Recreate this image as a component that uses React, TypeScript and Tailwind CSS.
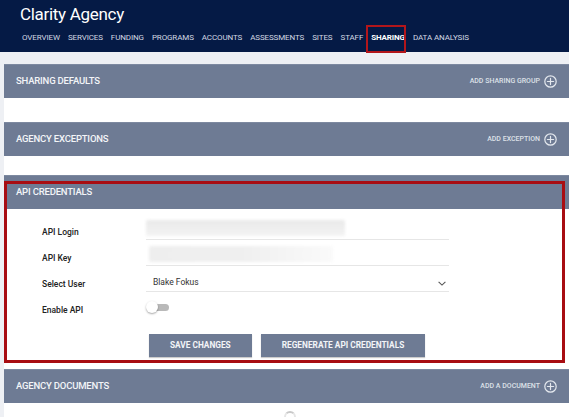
import React from "react";

const NAV = [
  "OVERVIEW",
  "SERVICES",
  "FUNDING",
  "PROGRAMS",
  "ACCOUNTS",
  "ASSESSMENTS",
  "SITES",
  "STAFF",
  "SHARING",
  "DATA ANALYSIS",
];

const PlusCircle = () => (
  <svg width="13" height="13" viewBox="0 0 13 13" fill="none" stroke="#e4e8ee" strokeWidth="1.2">
    <circle cx="6.5" cy="6.5" r="5.7" />
    <path d="M6.5 3.4v6.2M3.4 6.5h6.2" strokeLinecap="round" />
  </svg>
);

const PanelHeader = ({ title, action }: { title: string; action?: string }) => (
  <div className="flex h-[34px] items-center justify-between bg-[#6e7b94] pl-[12px] pr-[12px] border-t border-[#7d89a0]">
    <span className="text-[9.5px] font-medium tracking-[-0.02em] text-[#f3f5f8]">{title}</span>
    {action && (
      <div className="flex items-center gap-[4px]">
        <span className="text-[7px] font-medium text-[#dde1e8]">{action}</span>
        <PlusCircle />
      </div>
    )}
  </div>
);

const Label = ({ children }: { children: React.ReactNode }) => (
  <span className="w-[104px] shrink-0 pb-[3px] text-[8.5px] leading-[10px] font-medium text-[#222]">
    {children}
  </span>
);

export default function App() {
  return (
    <div className="h-[417px] w-[569px] overflow-hidden bg-[#eef0f4] font-['Roboto',sans-serif]">
      {/* Top bar */}
      <header className="h-[52px] bg-[#051a45] pl-[20px]">
        <h1 className="pt-[3px] text-[17px] leading-[22px] tracking-[-0.3px] text-white">Clarity Agency</h1>
        <nav className="mt-[8px] flex gap-[8px] pl-[2px] text-[8px] leading-[10px] tracking-[-0.015em] text-[#d3d8e2]">
          {NAV.map((item) =>
            item === "SHARING" ? (
              <span key={item} className="relative font-bold text-white">
                {item}
                <span className="absolute -left-[5px] -right-[1px] -top-[8px] -bottom-[10px] border-[2.5px] border-[#b3161b]" />
              </span>
            ) : (
              <span key={item}>{item}</span>
            )
          )}
        </nav>
      </header>

      <main className="flex flex-col pl-[4px] pt-[12px]">
        <PanelHeader title="SHARING DEFAULTS" action="ADD SHARING GROUP" />
        <div className="h-[24px] bg-white" />

        <PanelHeader title="AGENCY EXCEPTIONS" action="ADD EXCEPTION" />
        <div className="h-[19px] bg-white" />

        {/* API credentials, outlined */}
        <div className="relative">
          <PanelHeader title="API CREDENTIALS" />
          <div className="bg-white pl-[38px] pt-[5px] pb-[12px]">
            <div className="flex h-[26px] items-end">
              <Label>API Login</Label>
              <div className="h-full w-[303px] border-b border-[#e6e6e6] pt-[6px]">
                <div className="h-[16px] w-[199px] rounded-[2px] bg-gradient-to-b from-[#e9e9e9] to-[#f3f3f3] blur-[1.5px]" />
              </div>
            </div>
            <div className="flex h-[26px] items-end">
              <Label>API Key</Label>
              <div className="h-full w-[303px] border-b border-[#e6e6e6] pl-[3px] pt-[6px]">
                <div className="h-[16px] w-[184px] rounded-[2px] bg-gradient-to-r from-[#eeeeee] via-[#efefef] to-[#fafafa] blur-[1.5px]" />
              </div>
            </div>
            <div className="flex h-[26px] items-end">
              <Label>Select User</Label>
              <div className="flex h-full w-[303px] items-end justify-between border-b border-[#e6e6e6] pb-[4px] pl-[7px] pr-[3px]">
                <span className="text-[8.5px] leading-[10px] text-[#333]">Blake Fokus</span>
                <svg width="8" height="5" viewBox="0 0 8 5" fill="none" stroke="#555" strokeWidth="1.1" className="mb-[1px]">
                  <path d="M0.6 0.8L4 4.1L7.4 0.8" />
                </svg>
              </div>
            </div>
            <div className="flex h-[26px] items-end">
              <Label>Enable API</Label>
              <div className="relative mb-[5px] h-[12px] w-[24px]">
                <div className="absolute left-[4px] top-[2.5px] h-[7px] w-[19px] rounded-full bg-[#b9b9b9]" />
                <div className="absolute left-0 top-0 h-[11.5px] w-[11.5px] rounded-full bg-white shadow-[0_1px_2px_rgba(0,0,0,0.35)]" />
              </div>
            </div>
            <div className="mt-[16px] flex gap-[9px] pl-[107px]">
              <button className="h-[23px] bg-[#6e7b94] px-[21px] text-[8.3px] font-bold text-[#f3f5f8] shadow-[0_1px_1px_rgba(0,0,0,0.2)]">
                SAVE CHANGES
              </button>
              <button className="h-[23px] bg-[#6e7b94] px-[21px] text-[8.3px] font-bold text-[#f3f5f8] shadow-[0_1px_1px_rgba(0,0,0,0.2)]">
                REGENERATE API CREDENTIALS
              </button>
            </div>
          </div>
          <div className="pointer-events-none absolute bottom-[6px] left-0 right-[4px] top-[6px] border-[3px] border-[#a80d12]" />
        </div>

        <PanelHeader title="AGENCY DOCUMENTS" action="ADD A DOCUMENT" />
        <div className="flex h-[40px] justify-center bg-white pt-[8px]">
          <div className="ml-[6px] h-[12px] w-[12px] rounded-full border-2 border-[#e6e6e6] border-t-[#c9c9c9]" />
        </div>
      </main>
    </div>
  );
}
